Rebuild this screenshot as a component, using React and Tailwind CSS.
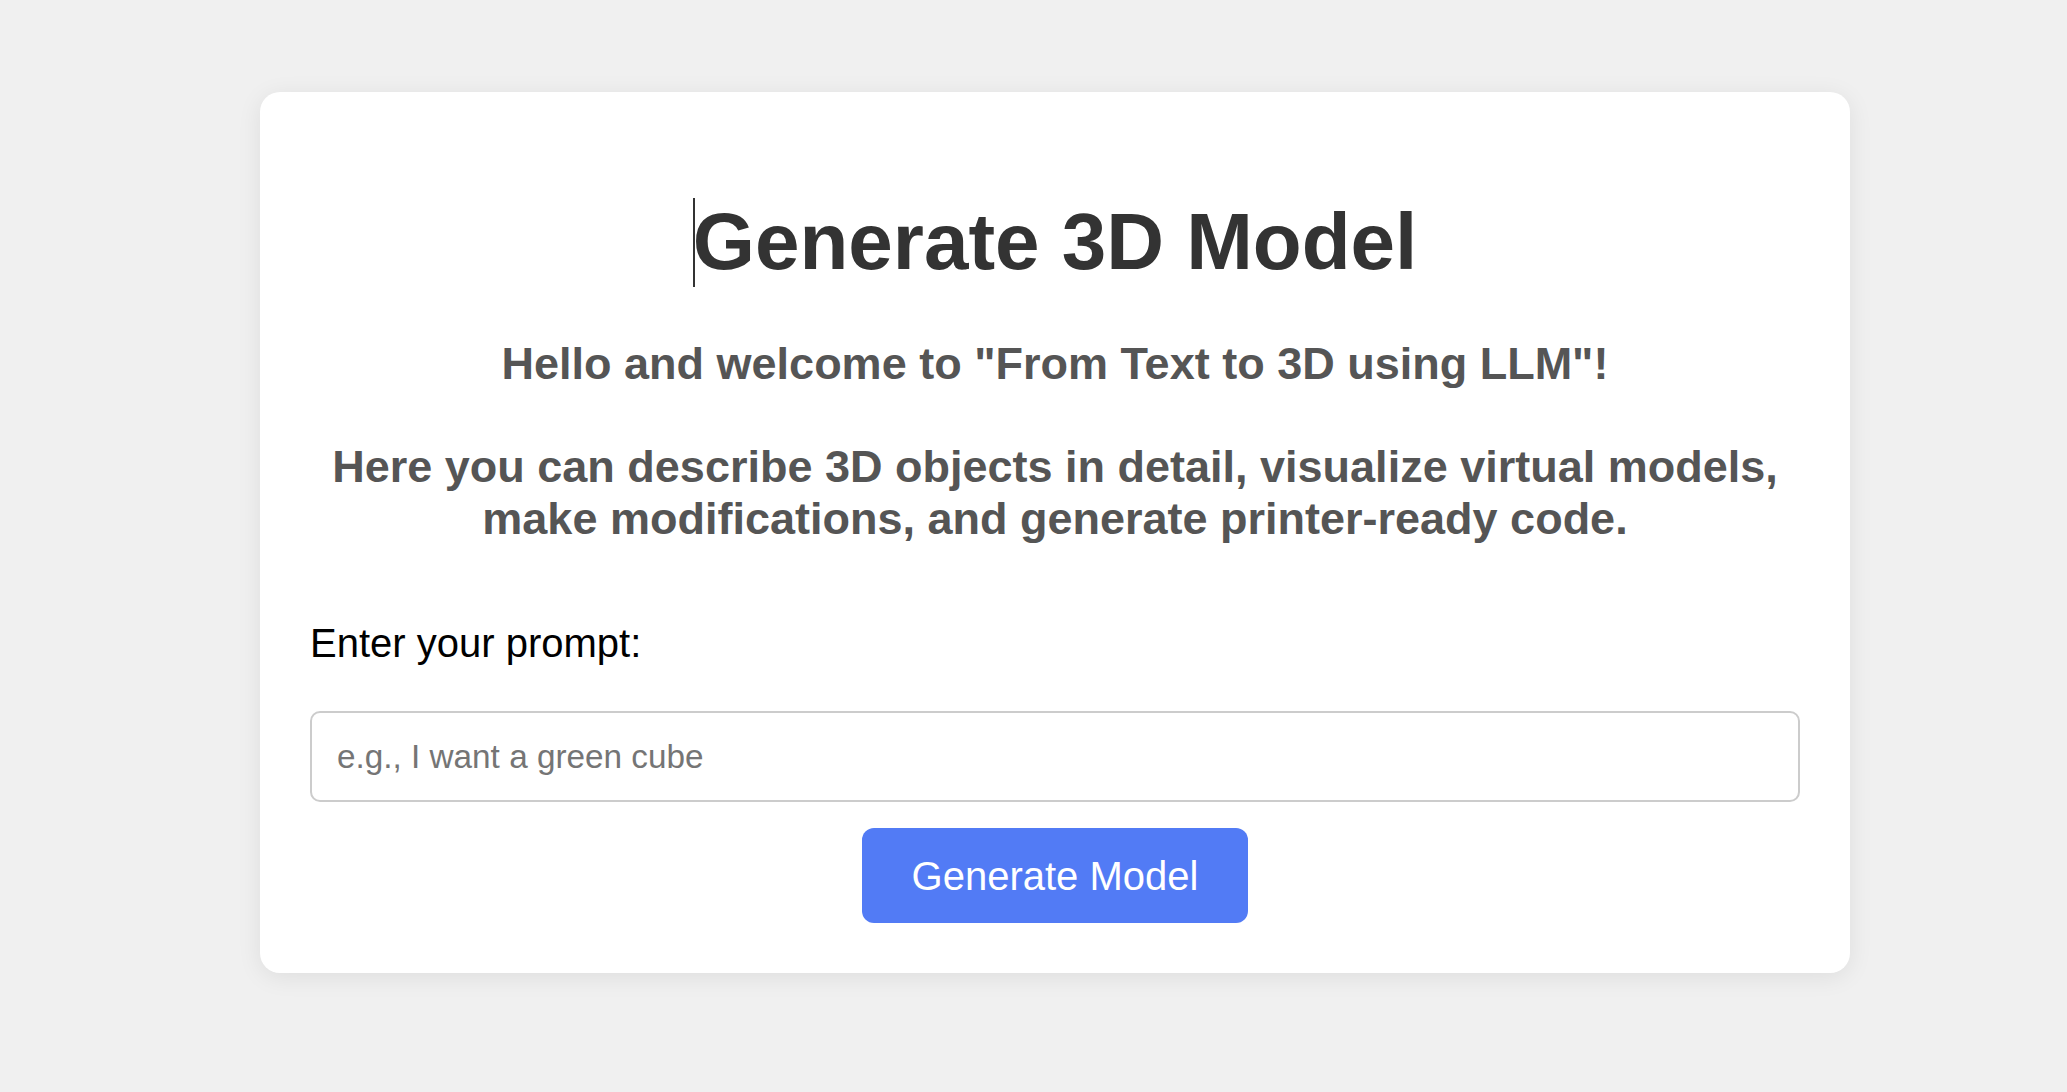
export default function App() {
  return (
    <div
      className="min-h-[1092px] w-full bg-[#f0f0f0] flex justify-center pl-[43px] pt-[92px]"
      style={{ fontFamily: '"Liberation Sans", Arial, sans-serif' }}
    >
      <div className="w-[1590px] h-[881px] bg-white rounded-[20px] shadow-[0_4px_24px_rgba(0,0,0,0.08)] px-[50px] pt-[104px] flex flex-col">
        <h1 className="text-center text-[80px] leading-[92px] font-bold text-[#333]">
          <span className="relative">
            <span className="absolute left-[0px] top-[1px] w-[2px] h-[89px] bg-[#333]"></span>
            Generate 3D Model
          </span>
        </h1>
        <p className="mt-[50px] text-center text-[45px] leading-[51.5px] font-bold text-[#555]">
          Hello and welcome to "From Text to 3D using LLM"!
          <br />
          <br />
          Here you can describe 3D objects in detail, visualize virtual models,
          <br />
          make modifications, and generate printer-ready code.
        </p>
        <label className="mt-[76px] text-[40px] leading-[46px] text-black">
          Enter your prompt:
        </label>
        <input
          type="text"
          placeholder="e.g., I want a green cube"
          className="mt-[45px] w-full h-[91px] border-2 border-[#ccc] rounded-[10px] px-[25px] text-[33.3px] text-black placeholder:text-[#757575] outline-none"
          style={{ fontFamily: '"Liberation Sans", Arial, sans-serif' }}
        />
        <div className="flex justify-center mt-[26px]">
          <button
            className="w-[386px] h-[95px] rounded-[12px] bg-[#527bf5] text-white text-[40px] leading-[46px]"
            style={{ fontFamily: '"Liberation Sans", Arial, sans-serif' }}
          >
            Generate Model
          </button>
        </div>
      </div>
    </div>
  );
}
